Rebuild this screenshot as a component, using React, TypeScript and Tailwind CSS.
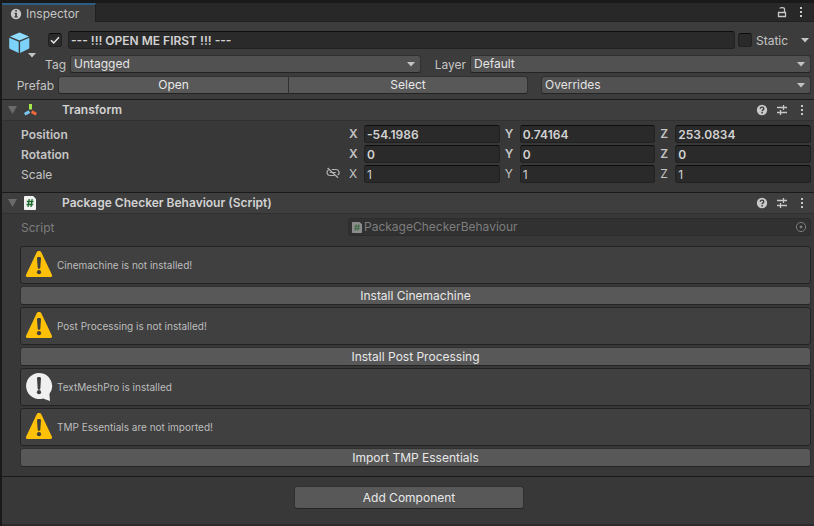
import React, { useState } from "react";

const button =
  "flex items-center justify-center rounded-[3px] border border-[#303030] border-b-[#242424] bg-[#585858] text-[#e8e8e8]";
const field =
  "h-[18px] min-w-0 rounded-[3px] border border-[#212121] border-t-[#0d0d0d] bg-[#2a2a2a] px-0.5 text-[#d2d2d2] outline-none";

function Arrow({ className = "" }: { className?: string }) {
  return (
    <svg width="8" height="5" viewBox="0 0 8 5" className={className} aria-hidden="true">
      <path d="M0 0h8L4 4.6z" fill="#c4c4c4" />
    </svg>
  );
}

function Dropdown({ id, value, className }: { id: string; value: string; className: string }) {
  return (
    <div className={`relative flex ${className}`}>
      <select
        id={id}
        aria-label={value}
        className="h-[18px] w-full appearance-none rounded-[3px] border border-[#303030] border-b-[#242424] bg-[#515151] pr-5 pl-[3px] leading-4 text-[#e4e4e4] outline-none"
      >
        <option>{value}</option>
      </select>
      <Arrow className="pointer-events-none absolute top-[7px] right-1.5" />
    </div>
  );
}

function Kebab() {
  return (
    <svg width="4" height="12" viewBox="0 0 4 12" aria-hidden="true">
      <path d="M1 1h2v2H1zM1 5h2v2H1zM1 9h2v2H1z" fill="#c8c8c8" />
    </svg>
  );
}

function HelpIcon() {
  return (
    <svg width="12" height="12" viewBox="0 0 12 12" aria-hidden="true">
      <circle cx="6" cy="6" r="5.2" fill="#c8c8c8" />
      <path d="M4.3 4.8c0-2.3 3.5-2.2 3.5-.1C7.8 5.9 6.1 5.9 6.1 7.2" fill="none" stroke="#3c3c3c" strokeWidth="1.3" />
      <path d="M5.4 8h1.4v1.4H5.4z" fill="#3c3c3c" />
    </svg>
  );
}

function PresetIcon() {
  return (
    <svg width="12" height="12" viewBox="0 0 12 12" aria-hidden="true">
      <path d="M1 3.5h6M7.5 3.5h3.5M1 8.5h3M5 8.5h6M7.5 1v5M4.5 6v5" stroke="#c8c8c8" strokeWidth="1.3" fill="none" />
    </svg>
  );
}

function TransformIcon() {
  return (
    <svg width="14" height="14" viewBox="0 0 14 14" aria-hidden="true">
      <path d="M6.500 1v5.5" stroke="#a6e84a" strokeWidth="3" />
      <path d="M5.400 8.600L.7 11.300" stroke="#7cc8f2" strokeWidth="3" />
      <path d="M7.600 8.600l4.700 2.700" stroke="#f0683c" strokeWidth="3" />
    </svg>
  );
}

function ScriptIcon({ dim = false }: { dim?: boolean }) {
  return (
    <svg width={dim ? 10 : 12} height={dim ? 11 : 14} viewBox="0 0 13 14" preserveAspectRatio="none" aria-hidden="true">
      <path d="M1 0h9l3 3v10a1 1 0 0 1-1 1H1a1 1 0 0 1-1-1V1a1 1 0 0 1 1-1z" fill={dim ? "#8c8c8c" : "#f2f2f2"} />
      <path
        d="M5.6 3L4.4 11M8.8 3L7.6 11M3 5.500h7.300M2.700 8.500H10"
        stroke={dim ? "#3f6b45" : "#1d6b2c"}
        strokeWidth="1.4"
        fill="none"
      />
    </svg>
  );
}

function Header({ icon, title }: { icon: React.ReactNode; title: string }) {
  return (
    <header className="flex h-[22px] items-center border-t border-b border-t-[#1a1a1a] border-b-[#303030] bg-[#3e3e3e] pr-1.5 pl-1.5">
      <svg width="9" height="8" viewBox="0 0 9 8" aria-hidden="true">
        <path d="M0 0h9L4.500 8z" fill="#6b6b6b" />
      </svg>
      <span className="ml-[7px] flex w-[38px] items-center">{icon}</span>
      <h2 className="flex-1 font-semibold text-[#d2d2d2]">{title}</h2>
      <div className="flex items-center gap-2">
        <button aria-label="Help">
          <HelpIcon />
        </button>
        <button aria-label="Presets">
          <PresetIcon />
        </button>
        <button aria-label="More options" className="flex w-3 justify-center">
          <Kebab />
        </button>
      </div>
    </header>
  );
}

function VectorRow({
  label,
  values,
  bold = false,
  linked = false,
}: {
  label: string;
  values: string[];
  bold?: boolean;
  linked?: boolean;
}) {
  return (
    <div className={`flex h-[18px] items-center ${bold ? "font-semibold" : ""}`}>
      <div className="flex w-[327px] shrink-0 items-center justify-between pt-0.5 pr-2">
        <span>{label}</span>
        {linked && (
          <svg
            width="14"
            height="12"
            viewBox="0 0 14 12"
            fill="none"
            stroke="#b4b4b4"
            strokeWidth="1.2"
            className="mb-1"
            aria-hidden="true"
          >
            <path d="M5.800 2.500H10a3 3 0 0 1 1.600 5.600M8.300 8.500H4a3 3 0 0 1-1.600-5.500M7.200 5.500h2.600M3.800 5.500h1.500M1.600 1L12 10.800" />
          </svg>
        )}
      </div>
      <div className="grid flex-1 grid-cols-3 gap-1">
        {["X", "Y", "Z"].map((axis, i) => (
          <label key={axis} className="flex min-w-0 items-center">
            <span className="w-4 shrink-0 pl-px">{axis}</span>
            <input defaultValue={values[i]} aria-label={`${label} ${axis}`} className={`${field} flex-1`} />
          </label>
        ))}
      </div>
    </div>
  );
}

function WarningIcon() {
  return (
    <svg width="28" height="28" viewBox="0 0 28 28" aria-hidden="true">
      <path d="M11.7 2.3C12.5.4 15.5.4 16.3 2.3L26.800 24.500C27.500 26 26.900 27 25.500 27h-23C1.100 27 .5 26 1.200 24.500z" fill="#ffc107" />
      <path d="M12 8.200c0-1.700 4-1.700 4 0l-.7 9.500c-.1 1.300-2.500 1.300-2.600 0z" fill="#3e3e3e" />
      <circle cx="14" cy="22.200" r="2.100" fill="#3e3e3e" />
    </svg>
  );
}

function InfoBubble() {
  return (
    <svg width="28" height="30" viewBox="0 0 28 30" aria-hidden="true">
      <path d="M14 1a13 13 0 0 1 10.400 20.900L25 29 18 26.400A13 13 0 1 1 14 1z" fill="#f0f0f0" />
      <path d="M12 6.200c0-1.700 4-1.700 4 0l-.7 10.500c-.1 1.300-2.500 1.300-2.600 0z" fill="#3e3e3e" />
      <circle cx="14" cy="20.200" r="2.100" fill="#3e3e3e" />
    </svg>
  );
}

function HelpBox({ text, info = false }: { text: string; info?: boolean }) {
  return (
    <div className="flex h-[38px] items-start rounded-[3px] border border-[#232323] bg-[#404040] pt-[3px] pl-1">
      {info ? <InfoBubble /> : <WarningIcon />}
      <p className="ml-1 self-center pb-[3px] text-[10px] leading-4 text-[#bdbdbd]">{text}</p>
    </div>
  );
}

function Check({ checked, onChange, id, label }: { checked: boolean; onChange: () => void; id: string; label: string }) {
  return (
    <span className="relative flex">
      <input
        type="checkbox"
        id={id}
        aria-label={label}
        checked={checked}
        onChange={onChange}
        className="size-3.5 appearance-none rounded-[3px] border border-[#212121] border-t-[#0d0d0d] bg-[#2a2a2a]"
      />
      {checked && (
        <svg width="14" height="14" viewBox="0 0 14 14" className="pointer-events-none absolute inset-0" aria-hidden="true">
          <path d="M3 7.200l2.700 2.700L11 4.200" fill="none" stroke="#e6e6e6" strokeWidth="1.500" />
        </svg>
      )}
    </span>
  );
}

export default function App() {
  const [active, setActive] = useState(true);
  const [isStatic, setIsStatic] = useState(false);

  return (
    <main className="flex min-h-screen flex-col border-t-[3px] border-l-2 border-[#191919] bg-[#383838] font-['Inter','Liberation_Sans',sans-serif] text-[12px] leading-4 text-[#c4c4c4]">
      <nav className="flex h-[19px] items-stretch justify-between border-b border-[#202020] bg-[#282828]">
        <button className="-mb-px flex w-[94px] items-center border-t-2 border-r border-t-[#2c5d87] border-r-[#202020] bg-[#3c3c3c] pl-2">
          <svg width="12" height="12" viewBox="0 0 12 12" aria-hidden="true">
            <circle cx="6" cy="6" r="5.200" fill="#c8c8c8" />
            <path d="M5.200 2h1.700v1.600H5.200zM4.500 4.700h2.400v3.600h.8v1.100H4.400V8.300h.8V5.700h-.7z" fill="#3c3c3c" />
          </svg>
          <span className="ml-1">Inspector</span>
        </button>
        <div className="flex items-center gap-2 pr-[7px]">
          <button aria-label="Lock">
            <svg width="10" height="12" viewBox="0 0 10 12" fill="none" stroke="#c8c8c8" strokeWidth="1.300" aria-hidden="true">
              <path d="M1.500 6.500h7v4h-7zM3 2.600c0-1.400 4.500-1.400 4.500.4v3.500" />
            </svg>
          </button>
          <button aria-label="Tab options" className="flex w-3 justify-center">
            <Kebab />
          </button>
        </div>
      </nav>

      <section className="flex bg-[#3c3c3c] pt-[9px] pr-[3px] pb-[5px]">
        <div className="flex min-w-0 flex-1 flex-col">
          <div className="flex h-[18px] items-center pl-1.5">
            <button aria-label="Prefab icon" className="h-[18px] w-10 shrink-0">
              <svg width="30" height="30" viewBox="0 0 30 30" aria-hidden="true">
                <path d="M11.500 1.500l9.500 3.900-9.500 4.100-9.500-4.100z" fill="#8fdcff" />
                <path d="M1.200 6.700l9.500 4v11.300l-8.500-3.900a1.600 1.600 0 0 1-1-1.500z" fill="#7dd2fb" />
                <path d="M21.300 6.700l-9.200 4v11.300l8.200-3.900a1.600 1.600 0 0 0 1-1.500z" fill="#7dd2fb" />
                <path d="M20 22h8l-4 4.500z" fill="#c4c4c4" />
              </svg>
            </button>
            <Check id="active" label="Active" checked={active} onChange={() => setActive(!active)} />
            <input
              aria-label="Name"
              defaultValue="--- !!! OPEN ME FIRST !!! ---"
              className={`${field} ml-1.5 flex-1 font-semibold`}
            />
            <span className="ml-[3px]">
              <Check id="static" label="Static" checked={isStatic} onChange={() => setIsStatic(!isStatic)} />
            </span>
            <label htmlFor="static" className="ml-1 w-[45px] pt-0.5">
              Static
            </label>
            <button aria-label="Static flags" className="mr-0.5">
              <Arrow />
            </button>
          </div>

          <div className="mt-1.5 flex h-[18px] items-center">
            <label htmlFor="tag" className="w-16 shrink-0 pt-0.5 text-right">
              Tag
            </label>
            <Dropdown id="tag" value="Untagged" className="ml-1 flex-[351]" />
            <label htmlFor="layer" className="w-[45px] shrink-0 pt-0.5 text-right">
              Layer
            </label>
            <Dropdown id="layer" value="Default" className="ml-1 flex-[341]" />
          </div>

          <div className="mt-[3px] flex h-[18px] items-center">
            <span className="w-[52px] shrink-0 pt-0.5 text-right">Prefab</span>
            <div className="ml-1 flex flex-[470]">
              <button className={`${button} h-[18px] flex-[231] rounded-r-none`}>Open</button>
              <button className={`${button} -ml-px h-[18px] flex-[240] rounded-l-none`}>Select</button>
            </div>
            <Dropdown id="overrides" value="Overrides" className="ml-[13px] flex-[270]" />
          </div>
        </div>
      </section>

      <section>
        <Header icon={<TransformIcon />} title="Transform" />
        <div className="flex flex-col gap-0.5 pt-1 pr-[3px] pb-[9px] pl-[19px]">
          <VectorRow label="Position" values={["-54.1986", "0.74164", "253.0834"]} bold />
          <VectorRow label="Rotation" values={["0", "0", "0"]} bold />
          <VectorRow label="Scale" values={["1", "1", "1"]} linked />
        </div>
      </section>

      <section>
        <Header icon={<ScriptIcon />} title="Package Checker Behaviour (Script)" />
        <div className="pt-1 pr-[3px] pb-[9px] pl-[18px]">
          <div className="flex h-[18px] items-center text-[#7d7d7d]">
            <span className="w-[328px] shrink-0 pt-0.5 pl-px">Script</span>
            <div className="flex h-[18px] flex-1 items-center justify-between rounded-[3px] border border-[#2c2c2c] bg-[#313131] pr-[3px] pl-[3px]">
              <span className="flex items-center gap-0.5">
                <ScriptIcon dim />
                PackageCheckerBehaviour
              </span>
              <svg width="12" height="12" viewBox="0 0 12 12" aria-hidden="true">
                <circle cx="6" cy="6" r="4.600" fill="none" stroke="#7d7d7d" />
                <circle cx="6" cy="6" r="1.400" fill="#7d7d7d" />
              </svg>
            </div>
          </div>
          <div className="mt-2.5 flex flex-col gap-0.5">
            <HelpBox text="Cinemachine is not installed!" />
            <button className={`${button} h-[19px]`}>Install Cinemachine</button>
            <HelpBox text="Post Processing is not installed!" />
            <button className={`${button} h-[19px]`}>Install Post Processing</button>
            <HelpBox text="TextMeshPro is installed" info />
            <HelpBox text="TMP Essentials are not imported!" />
            <button className={`${button} h-[19px]`}>Import TMP Essentials</button>
          </div>
        </div>
      </section>

      <footer className="flex flex-1 items-start justify-center border-t border-b-2 border-t-[#1a1a1a] border-b-[#2a2a2a] pt-[9px] pl-0.5">
        <button className={`${button} h-[23px] w-[230px]`}>Add Component</button>
      </footer>
    </main>
  );
}
